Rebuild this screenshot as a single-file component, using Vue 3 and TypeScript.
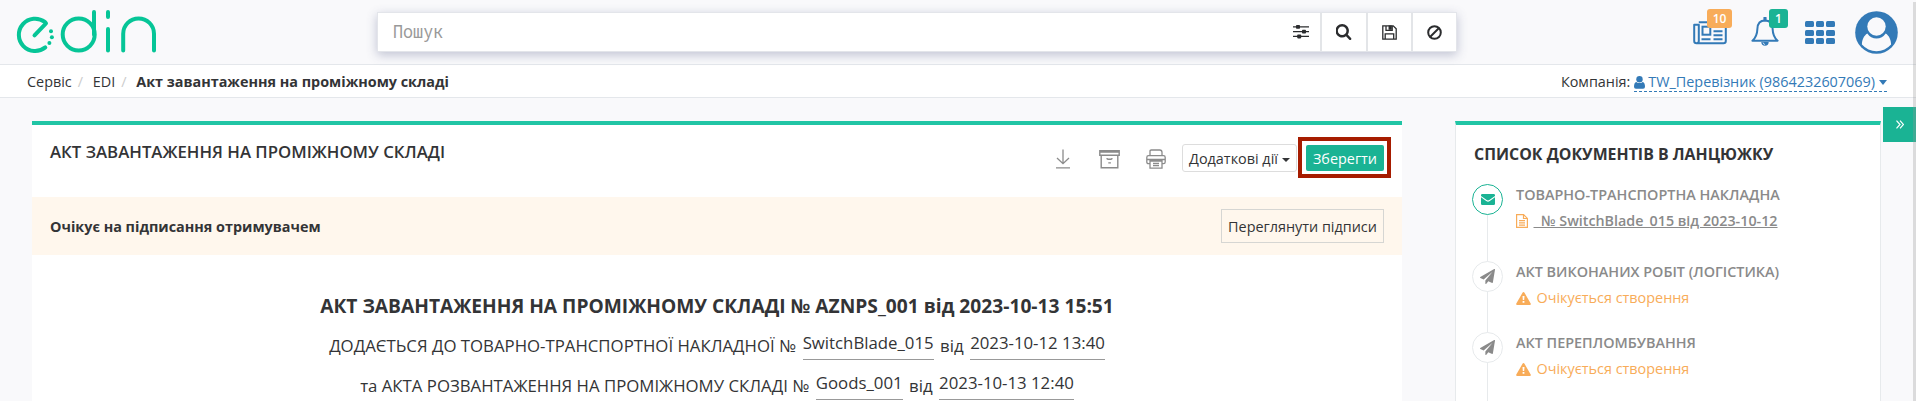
<script setup lang="ts">
interface ChainItem {
  title: string
  state: 'sent' | 'pending'
  text: string
}

const chain: ChainItem[] = [
  { title: 'ТОВАРНО-ТРАНСПОРТНА НАКЛАДНА', state: 'sent', text: '№ SwitchBlade_015 від 2023-10-12' },
  { title: 'АКТ ВИКОНАНИХ РОБІТ (ЛОГІСТИКА)', state: 'pending', text: 'Очікується створення' },
  { title: 'АКТ ПЕРЕПЛОМБУВАННЯ', state: 'pending', text: 'Очікується створення' },
]
const cells = [0, 1, 2, 3, 4, 5, 6, 7, 8]
</script>

<template>
  <div class="page">
    <header class="top">
      <svg class="logo" width="160" height="64" viewBox="0 0 160 64" role="img" aria-label="edin">
        <g fill="none" stroke="#06c597" stroke-width="4" stroke-linecap="round" stroke-linejoin="round">
          <path d="M34.500 35.300 46 23.300 44.800 21.900A16.200 16.200 0 1 0 45.300 47.400" />
          <circle cx="78.700" cy="34.500" r="16" />
          <path d="M94 12v22.500M108 12v5M108 29v21.500M123.200 50.500V33.800a15.400 15.400 0 0 1 30.800 0v16.700" />
        </g>
        <g fill="#06c597">
          <circle cx="51" cy="31.300" r="2" /><circle cx="51.900" cy="37.300" r="2" /><circle cx="49.400" cy="43" r="2" />
        </g>
      </svg>

      <div class="search">
        <span class="placeholder"><span>Пошук</span></span>
        <button class="tool filter">
          <svg width="16" height="14" viewBox="0 0 16 14" fill="#2b2c2e">
            <path d="M0 1.300h16v1.300H0zM0 6h16v1.300H0zM0 10.800h16v1.300H0z" />
            <rect x="3" y="0" width="4" height="3.800" rx=".8" /><rect x="9" y="4.800" width="4" height="3.800" rx=".8" /><rect x="4.200" y="9.600" width="4" height="3.800" rx=".8" />
          </svg>
        </button>
        <button class="tool w45">
          <svg width="16" height="16" viewBox="64 128 1664 1664" fill="#2b2c2e"><path d="M1152 832q0-185-131.500-316.500t-316.500-131.500-316.500 131.500-131.500 316.500 131.500 316.500 316.500 131.500 316.500-131.500 131.500-316.500zm512 832q0 52-38 90t-90 38q-54 0-90-38l-343-342q-179 124-399 124-143 0-273.500-55.500t-225-150-150-225-55.500-273.500 55.500-273.500 150-225 225-150 273.500-55.500 273.500 55.500 225 150 150 225 55.500 273.500q0 220-124 399l343 343q37 37 37 90z" /></svg>
        </button>
        <button class="tool w44">
          <svg width="15" height="15" viewBox="0 0 15 15" fill="none" stroke="#2b2c2e" stroke-width="1.300">
            <path d="M.8.8h10.400l3 3v10.400H.8zM3.200 14V8.800h8.500V14M4 1v4.300h6.200V1" /><path d="M7.200 1.200h1.900v3H7.200z" fill="#2b2c2e" />
          </svg>
        </button>
        <button class="tool w44">
          <svg width="15" height="15" viewBox="0 0 15 15" fill="none" stroke="#2b2c2e" stroke-width="2"><circle cx="7.500" cy="7.500" r="6.300" /><path d="M3 12 12 3" /></svg>
        </button>
      </div>

      <nav class="icons">
        <a class="news">
          <svg width="34" height="24" viewBox="0 0 34 24" fill="none" stroke="#337ab7" stroke-width="2">
            <path d="M5.800 1.200H32.800V20q0 2.300-2.300 2.300H3.500Q1.200 22.300 1.200 20V3.800H5.800V20q0 2.300-2.300 2.300" stroke-linejoin="round" />
            <rect x="9.500" y="5.700" width="7.800" height="8" /><path d="M20.500 6h9M20.500 10.300h9M20.500 14.200h9M8.500 18.300H17.500M20.500 18.300h9" />
          </svg>
          <b class="badge orange">10</b>
        </a>
        <a class="bell">
          <svg width="28" height="30" viewBox="0 0 28 30" fill="none" stroke="#337ab7" stroke-width="2" stroke-linejoin="round">
            <path d="M14 3.600c5 0 7.400 3.400 7.600 8.200.2 6 2 9.500 5 11.900H1.400c3-2.400 4.800-5.900 5-11.900C6.600 7 9 3.600 14 3.600z" />
            <path d="M14 1v2" stroke-width="3.200" stroke-linecap="round" /><path d="M10.300 25h7.400a3.700 3.700 0 0 1-7.400 0z" fill="#337ab7" stroke="none" /><path d="M12 25.500q.3 1.700 2 2" stroke="#f9f9fb" stroke-width=".8" />
          </svg>
          <b class="badge green">1</b>
        </a>
        <a class="apps">
          <i v-for="c in cells" :key="c" />
        </a>
        <a class="avatar">
          <svg width="43" height="43" viewBox="0 0 43 43">
            <circle cx="21.500" cy="21.500" r="21.300" fill="#337ab7" />
            <path d="M12.300 22.500C9 24.500 7 28.800 6.900 33.600a19.500 19.500 0 0 0 29.200 0c-.1-4.800-2.100-9.100-5.400-11.100a11 11 0 0 1-18.400 0z" fill="#f9f9fb" />
            <circle cx="21.500" cy="15.500" r="9.200" fill="#f9f9fb" />
          </svg>
        </a>
      </nav>
    </header>

    <div class="crumbs">
      <div class="path"><span class="c1">Сервіс</span><i>/</i><span class="c2">EDI</span><i>/</i><b>Акт завантаження на проміжному складі</b></div>
      <div class="company">
        <span class="lbl">Компанія:</span>
        <a><svg width="11" height="13" viewBox="0 0 11 13" fill="#337ab7"><circle cx="5.500" cy="3.300" r="3.200" /><path d="M2.300 5.900q3.200 2.400 6.400 0Q11 6.600 11 10.700q0 2.100-1.900 2.100H1.900Q0 12.800 0 10.700 0 6.600 2.300 5.900z" /></svg><span class="who">TW_Перевізник (9864232607069)</span><em class="caret" /></a>
      </div>
    </div>

    <main class="body">
      <section class="panel doc">
        <div class="doc-head">
          <h1>АКТ ЗАВАНТАЖЕННЯ НА ПРОМІЖНОМУ СКЛАДІ</h1>
          <div class="actions">
            <svg class="dl" width="14" height="20" viewBox="0 0 14 20" fill="none" stroke="#8b8b8b" stroke-width="1.300"><path d="M7 .5v14M1 9l6 5.700L13 9M0 18.800h14" /></svg>
            <svg class="arch" width="21" height="20" viewBox="0 0 21 20" fill="none" stroke="#8b8b8b" stroke-width="1.400"><path d="M.8 1.700h19.400v4.500H.8zM2.200 6.200v12.500h16.600V6.200M.8 3h19.400M8 9q0 1.300 1 1.300h3q1 0 1-1.300M9.300 13.900h2.600" /></svg>
            <svg class="print" width="20" height="20" viewBox="0 0 20 20" fill="none" stroke="#8b8b8b" stroke-width="1.300"><path d="M4 6.500V2.300Q4 1 5.300 1h8.400Q16 1 16 3.300v3.200M4 14.700H2.500Q.8 14.700.8 13V8.400q0-1.800 1.700-1.800h15q1.700 0 1.700 1.800V13q0 1.700-1.700 1.700H16M4 12h12v7.200H4zM1 10.500h18M7 14.500h6M7 16.700h6" /></svg>
            <button class="more">Додаткові дії<em class="caret" /></button>
            <div class="mark"><button class="save">Зберегти</button></div>
          </div>
        </div>
        <div class="notice"><b>Очікує на підписання отримувачем</b><button>Переглянути підписи</button></div>
        <div class="act">
          <h2>АКТ ЗАВАНТАЖЕННЯ НА ПРОМІЖНОМУ СКЛАДІ № AZNPS_001 від 2023-10-13 15:51</h2>
          <p class="l1"><span>ДОДАЄТЬСЯ ДО ТОВАРНО-ТРАНСПОРТНОЇ НАКЛАДНОЇ №</span><u>SwitchBlade_015</u><span>від</span><u>2023-10-12 13:40</u></p>
          <p class="l2"><span>та АКТА РОЗВАНТАЖЕННЯ НА ПРОМІЖНОМУ СКЛАДІ №</span><u>Goods_001</u><span>від</span><u>2023-10-13 12:40</u></p>
        </div>
      </section>

      <aside class="panel chain">
        <h3>СПИСОК ДОКУМЕНТІВ В ЛАНЦЮЖКУ</h3>
        <ul>
          <li v-for="item in chain" :key="item.title" :class="item.state">
            <div class="rail">
              <span class="dot">
                <svg v-if="item.state === 'sent'" width="14" height="11" viewBox="0 0 14 11" fill="#1ab394"><path d="M1.300 0h11.400Q14 0 14 1.300v.6L8.300 6Q7 6.900 5.700 6L0 1.900v-.6Q0 0 1.300 0zM0 3.300l5.200 3.800q1.800 1.200 3.600 0L14 3.300v6.400Q14 11 12.700 11H1.300Q0 11 0 9.700z" /></svg>
                <svg v-else width="15" height="15" viewBox="0 0 1792 1792" fill="#8a8a8a"><path d="M1764 11q33 24 27 64l-256 1536q-5 29-32 45-14 8-31 8-11 0-24-5l-453-185-242 295q-18 23-49 23-13 0-22-4-19-7-30.500-23.500t-11.500-36.500v-349l864-1059-1069 925-395-162q-37-14-40-55-2-40 32-59l1664-960q15-9 32-9 20 0 36 11z" /></svg>
              </span>
            </div>
            <div class="info">
              <strong>{{ item.title }}</strong>
              <div v-if="item.state === 'sent'" class="line">
                <svg width="12" height="14" viewBox="0 0 12 14" fill="none" stroke="#f8ac59" stroke-width="1.200"><path d="M.6.6h7l3.800 3.800v9H.6zM7.500.6v3.900h3.900M3 6.700h6M3 8.900h6M3 11.100h6" /></svg>
                <a>&nbsp;&nbsp;{{ item.text }}</a>
              </div>
              <div v-else class="line">
                <svg width="15" height="13" viewBox="0 0 15 13"><path d="M7.500 0q.6 0 1 .7l6.200 10.800q.5 1.400-.9 1.500H1.200Q-.2 12.900.3 11.500L6.500.7q.4-.7 1-.7z" fill="#f8ac59" /><path d="M6.500 4h2l-.3 4H6.800zM6.600 9h1.800v1.800H6.600z" fill="#fff" /></svg>
                <span>{{ item.text }}</span>
              </div>
            </div>
          </li>
        </ul>
      </aside>
    </main>

    <button class="toggle"><svg width="8" height="9" viewBox="0 0 8 9" fill="none" stroke="#fff" stroke-width="1.200"><path d="M.5.700 4 4.500.5 8.300M4 .700 7.500 4.500 4 8.300" /></svg></button>
    <div class="scroll" />
  </div>
</template>

<style>
body { margin: 0; overflow: hidden; }
</style>

<style scoped>
* { box-sizing: border-box; }
.page { position: relative; width: 1916px; height: 401px; overflow: hidden; background: #f9f9fb; color: #333436; font: 14.400px/20px "Open Sans", "Noto Sans", sans-serif; }
button { font: inherit; color: inherit; margin: 0; padding: 0; }
svg { display: block; flex: none; }
.top { display: flex; height: 65px; border-bottom: 1px solid #e4e7eb; align-items: flex-start; }
.search { display: flex; margin: 12px 0 0 217px; width: 1080px; height: 40px; background: #fff; border: 1px solid #e3e5ea; box-shadow: 0 3px 10px rgba(60, 70, 120, .3); }
.placeholder { flex: 1; padding-left: 15px; font: 18px/37px "Noto Sans Mono", "DejaVu Sans Mono", monospace; color: #999; }
.placeholder span { display: inline-block; transform: scaleX(.93); transform-origin: 0 50%; }
.tool { display: flex; align-items: center; justify-content: center; border: 0; border-left: 2px solid #e3e5e8; background: none; }
.filter { border: 0; width: 38px; }
.w45 { width: 46px; }
.w44 { width: 45px; }
.icons { display: flex; margin-left: 236px; }
.icons a { position: relative; }
.news { margin-top: 20.500px; width: 34px; }
.bell { margin: 17px 0 0 24px; width: 28px; }
.badge { position: absolute; height: 19px; border-radius: 3px; color: #fff; font-size: 12px; font-weight: 600; line-height: 19px; text-align: center; }
.orange { left: 14px; top: -11.500px; width: 25px; background: #f8ac59; }
.green { left: 18px; top: -8px; width: 19px; background: #1ab394; }
.apps { display: grid; grid-template-columns: repeat(3, 8.500px); grid-auto-rows: 6px; gap: 2.500px 2px; margin: 21px 0 0 26px; height: 24px; }
.apps i { background: #337ab7; border-radius: 1.500px; }
.avatar { margin: 10.500px 0 0 20px; }
.crumbs { display: flex; justify-content: space-between; height: 33px; background: #fff; border-bottom: 1px solid #e4e7eb; padding: 7px 29px 0 27px; }
.path { display: flex; white-space: nowrap; }
.path i { font-style: normal; color: #ccc; width: 15px; padding-left: 6px; }
.path .c2 { margin-left: 6px; }
.path b { margin-left: 6px; }
.company { display: flex; gap: 4px; }
.company a { display: flex; height: 20px; color: #337ab7; border-bottom: 1px dashed #337ab7; white-space: nowrap; }
.company svg { margin: 4px 3px 0 0; }
.caret { display: inline-block; border: 4px solid transparent; border-top-color: currentColor; border-bottom: 0; margin-left: 4px; vertical-align: 2px; }
.company .caret { margin-top: 8px; border-width: 5px 4px 0; }
.body { display: flex; align-items: flex-start; padding: 23px 35px 0 32px; gap: 53px; }
.panel { background: #fff; border-top: 4px solid #21c5a5; height: 290px; }
.doc { width: 1370px; }
.doc-head { display: flex; justify-content: space-between; height: 72px; padding: 0 11px 0 18px; }
h1 { margin: 16px 0 0; font-size: 16.800px; line-height: 22px; font-weight: 600; }
.actions { display: flex; align-items: flex-start; }
.dl { margin: 24px 29px 0 0; }
.arch { margin: 24px 26px 0 0; }
.print { margin: 24px 16px 0 0; }
.more { height: 28px; width: 115px; margin: 19px 1px 0 0; border: 1px solid #ddd; border-radius: 3px; background: #fff; padding-top: 1px; }
.mark { margin-top: 12px; border: 4px solid #a61c00; padding: 4px 3px 3px 4px; width: 93px; height: 41px; }
.save { display: block; width: 78px; height: 26px; border: 0; border-radius: 2px; background: #1ab394; color: #fff; padding-top: 1px; }
.notice { display: flex; align-items: center; justify-content: space-between; height: 58px; background: #fff7ed; padding: 0 18px; }
.notice b { padding-top: 2px; }
.notice button { width: 163px; height: 34px; border: 1px solid #d6d6d3; background: none; padding-top: 1px; }
.act { text-align: center; white-space: nowrap; }
h2 { margin: 37px 0 0; font-size: 19.200px; line-height: 28px; font-weight: 700; }
.act p { display: flex; justify-content: center; margin: 0; gap: 6.500px; font-size: 16.800px; line-height: 22px; }
.act p span { margin-top: 3px; }
.act u { text-decoration: none; border-bottom: 1px solid #999; height: 28px; }
.l1 { padding-top: 12px; }
.act .l2 { margin-top: 12px; }
.chain { width: 426px; border-left: 1px solid #e7eaec; border-right: 1px solid #e7eaec; padding-left: 16px; }
h3 { margin: 18px 0 0 2px; font-size: 15.900px; line-height: 22px; font-weight: 700; }
ul { list-style: none; margin: 19px 0 0; padding: 0; }
li { display: flex; height: 71px; }
li.sent { height: 77px; }
.rail { width: 31px; background: linear-gradient(#e7eaec, #e7eaec) 15px 0 / 1px 100% no-repeat; }
.dot { display: flex; align-items: center; justify-content: center; width: 31px; height: 31px; border: 1px solid #e7eaec; border-radius: 50%; background: #fff; }
.sent .dot { border-color: #1ab394; }
.info { padding-left: 13px; white-space: nowrap; }
.info strong { display: block; font-weight: 600; color: #8a8a8a; margin-top: 1px; }
.line { display: flex; align-items: center; gap: 5.500px; margin-top: 6px; color: #f8ac59; }
.line a { color: #8a8a8a; font-weight: 600; font-size: 14.300px; text-decoration: underline; }
.toggle { position: absolute; right: 0; top: 107px; width: 33px; height: 35px; border: 0; background: #1ab394; display: flex; align-items: center; justify-content: center; }
.scroll { position: absolute; right: 0; top: 2px; width: 3px; height: 399px; background: rgba(150, 150, 150, .3); }
</style>
